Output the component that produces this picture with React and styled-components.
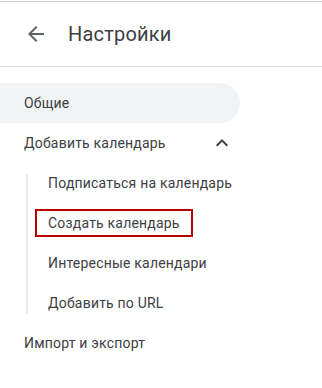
import React from "react";
import styled, { createGlobalStyle } from "styled-components";

const Global = createGlobalStyle`
  html, body { margin: 0; padding: 0; background: #ffffff; }
  body { font-family: Roboto, "Noto Sans", Arial, sans-serif; -webkit-font-smoothing: antialiased; }
`;

const Page = styled.div`
  width: 322px;
  height: 388px;
  box-sizing: border-box;
  margin-top: 1px;
  border-top: 1px solid #cfcfc8;
  background: #fff;
  overflow: hidden;
`;

const Header = styled.header`
  display: flex;
  align-items: center;
  height: 64px;
  border-bottom: 1px solid #dadce0;
  padding-left: 24px;
  box-sizing: border-box;
  height: 65px;
`;

const IconButton = styled.button`
  width: 24px;
  height: 24px;
  padding: 0;
  border: none;
  background: none;
  display: flex;
  align-items: center;
  justify-content: center;
  color: #5f6368;
  margin-right: 20px;
`;

const Title = styled.h1`
  margin: 0;
  font-size: 20px;
  font-weight: 400;
  color: #3c4043;
  letter-spacing: 0.2px;
`;

const Nav = styled.nav`
  display: flex;
  flex-direction: column;
  padding-top: 16px;
`;

const Item = styled.div`
  display: flex;
  align-items: center;
  justify-content: space-between;
  height: 40px;
  width: 240px;
  box-sizing: border-box;
  padding: 0 6px 0 24px;
  font-size: 14px;
  color: #3c4043;
  letter-spacing: 0.2px;
  border-radius: 0 20px 20px 0;
  background: ${(p) => (p.$active ? "#f1f3f4" : "transparent")};
`;

const SubList = styled.div`
  position: relative;
  display: flex;
  flex-direction: column;
  &::before {
    content: "";
    position: absolute;
    left: 26px;
    top: 11px;
    bottom: 9px;
    width: 2px;
    background: #e8eaed;
  }
`;

const SubItem = styled.div`
  display: flex;
  align-items: center;
  height: 40px;
  padding-left: 35px;
`;

const SubLabel = styled.span`
  display: inline-flex;
  align-items: center;
  height: 28px;
  box-sizing: border-box;
  padding: 0 11px;
  font-size: 14px;
  color: #3c4043;
  letter-spacing: 0.2px;
  border: 2px solid ${(p) => (p.$marked ? "#b80000" : "transparent")};
`;

const ArrowBack = () => (
  <svg width="24" height="24" viewBox="0 0 24 24" fill="currentColor">
    <path d="M20 11H7.83l5.59-5.59L12 4l-8 8 8 8 1.41-1.41L7.83 13H20v-2z" />
  </svg>
);

const ExpandLess = () => (
  <svg width="24" height="24" viewBox="0 0 24 24" fill="#3c4043">
    <path d="M12 8l-6 6 1.41 1.41L12 10.83l4.59 4.58L18 14z" />
  </svg>
);

const sub = [
  { label: "Подписаться на календарь" },
  { label: "Создать календарь", marked: true },
  { label: "Интересные календари" },
  { label: "Добавить по URL" },
];

export default function App() {
  return (
    <>
      <Global />
      <Page>
        <Header>
          <IconButton aria-label="Назад">
            <ArrowBack />
          </IconButton>
          <Title>Настройки</Title>
        </Header>
        <Nav>
          <Item $active>Общие</Item>
          <Item>
            Добавить календарь
            <ExpandLess />
          </Item>
          <SubList>
            {sub.map((s) => (
              <SubItem key={s.label}>
                <SubLabel $marked={s.marked}>{s.label}</SubLabel>
              </SubItem>
            ))}
          </SubList>
          <Item>Импорт и экспорт</Item>
        </Nav>
      </Page>
    </>
  );
}
